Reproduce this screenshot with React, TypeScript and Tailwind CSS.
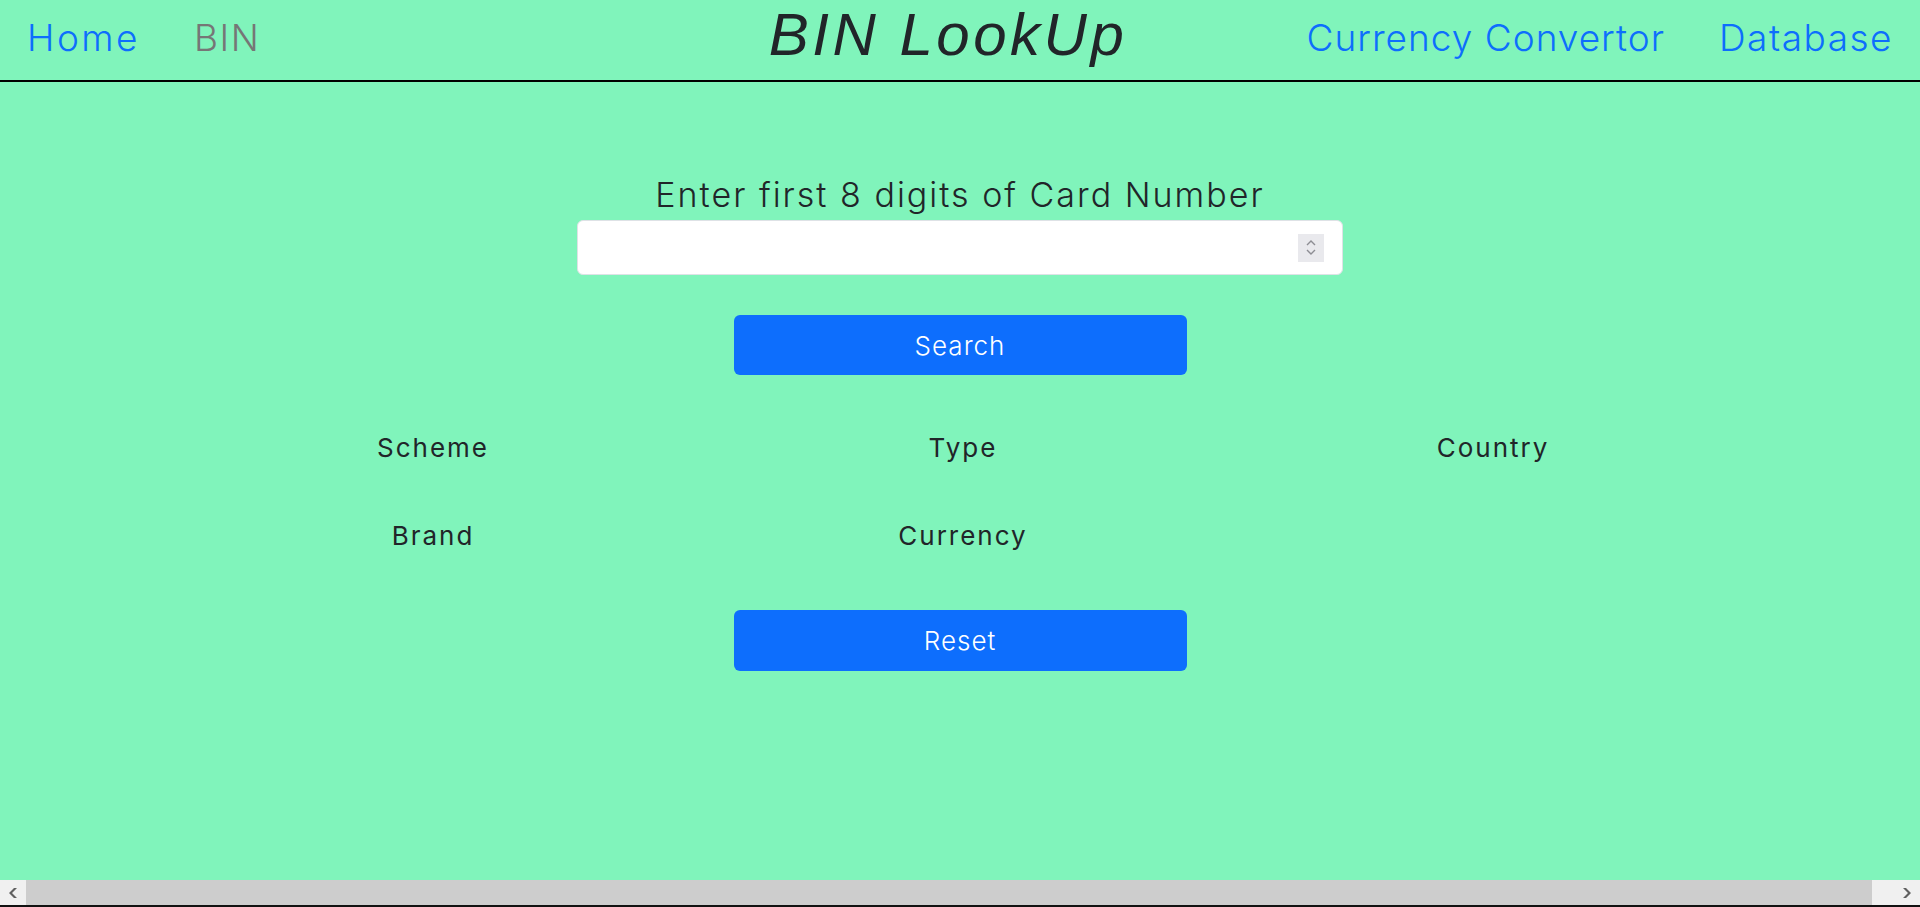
import { useState } from "react"

const sans = "font-['Inter','Noto_Sans',sans-serif]"

function NavLink({ label, active, tracking = "tracking-[1.5px]" }: { label: string; active?: boolean; tracking?: string }) {
  return (
    <a
      href="#"
      className={`px-[27px] text-[37px] font-light leading-none ${tracking} ${active ? "text-[#767676]" : "text-[#0d6efd]"}`}
    >
      {label}
    </a>
  )
}

function Spinner() {
  return (
    <div className="flex h-[28px] w-[26px] flex-col items-center justify-center bg-[#e9e9ed] text-[#8d8d93]">
      <svg width="10" height="7" viewBox="0 0 10 7" fill="none" stroke="currentColor" strokeWidth="1.4">
        <path d="M1 6 L5 2 L9 6" />
      </svg>
      <svg width="10" height="7" viewBox="0 0 10 7" fill="none" stroke="currentColor" strokeWidth="1.4" className="mt-[3px]">
        <path d="M1 1 L5 5 L9 1" />
      </svg>
    </div>
  )
}

export default function App() {
  const [bin, setBin] = useState("")
  const fields = ["Scheme", "Type", "Country", "Brand", "Currency"]

  return (
    <div className={`flex h-[907px] w-full flex-col overflow-hidden ${sans}`}>
      <div className="h-[880px] bg-[#80f4bb]">
        <header className="grid h-[82px] grid-cols-[1fr_auto_1fr] items-center border-b-2 border-black">
          <nav className="flex items-center pb-[6px]">
            <NavLink label="Home" tracking="tracking-[2.5px]" />
            <NavLink label="BIN" active />
          </nav>
          <h1 className="pb-[10px] pr-[24px] font-['Liberation_Sans',Arial,sans-serif] text-[60px] italic leading-none tracking-[3.5px] text-[#212529]">
            BIN LookUp
          </h1>
          <nav className="flex items-center justify-end pb-[6px]">
            <NavLink label="Currency Convertor" tracking="tracking-[1px]" />
            <NavLink label="Database" />
          </nav>
        </header>

        <main className="flex flex-col items-center">
          <label className="mt-[93px] text-[34px] font-light leading-[40px] tracking-[2px] text-[#212529]">
            Enter first 8 digits of Card Number
          </label>
          <div className="mt-[5px] flex h-[55px] w-[766px] items-center rounded-[6px] border border-[#dee2e6] bg-white pr-[18px]">
            <input
              type="text"
              value={bin}
              onChange={(e) => setBin(e.target.value)}
              className="h-full flex-1 rounded-[6px] bg-transparent px-4 text-[20px] outline-none"
            />
            <Spinner />
          </div>

          <button className="mt-[40px] h-[60px] w-[453px] rounded-[6px] bg-[#0d6efd] text-[26px] font-light tracking-[1px] text-white">
            Search
          </button>

          <div className="ml-[6px] mt-[56px] grid w-[1590px] grid-cols-3 gap-y-[54px]">
            {fields.map((f) => (
              <div key={f} className="text-center text-[26px] leading-[34px] tracking-[2px] text-[#212529]">
                {f}
              </div>
            ))}
          </div>

          <button className="mt-[57px] h-[61px] w-[453px] rounded-[6px] bg-[#0d6efd] text-[26px] font-light tracking-[1px] text-white">
            Reset
          </button>
        </main>
      </div>

      {/* fake horizontal scrollbar */}
      <div className="flex h-[25px] bg-[#f0f0f0]">
        <div className="flex w-[26px] items-center justify-center text-[#606060]">
          <svg width="10" height="12" viewBox="0 0 10 12" fill="currentColor">
            <path d="M6 1 L1 6 L6 11 L9 11 L4 6 L9 1 Z" />
          </svg>
        </div>
        <div className="flex-1 bg-[#cdcdcd]" />
        <div className="w-[22px]" />
        <div className="flex w-[26px] items-center justify-center text-[#606060]">
          <svg width="10" height="12" viewBox="0 0 10 12" fill="currentColor">
            <path d="M4 1 L9 6 L4 11 L1 11 L6 6 L1 1 Z" />
          </svg>
        </div>
      </div>
      <div className="h-[2px] bg-[#111]" />
    </div>
  )
}
